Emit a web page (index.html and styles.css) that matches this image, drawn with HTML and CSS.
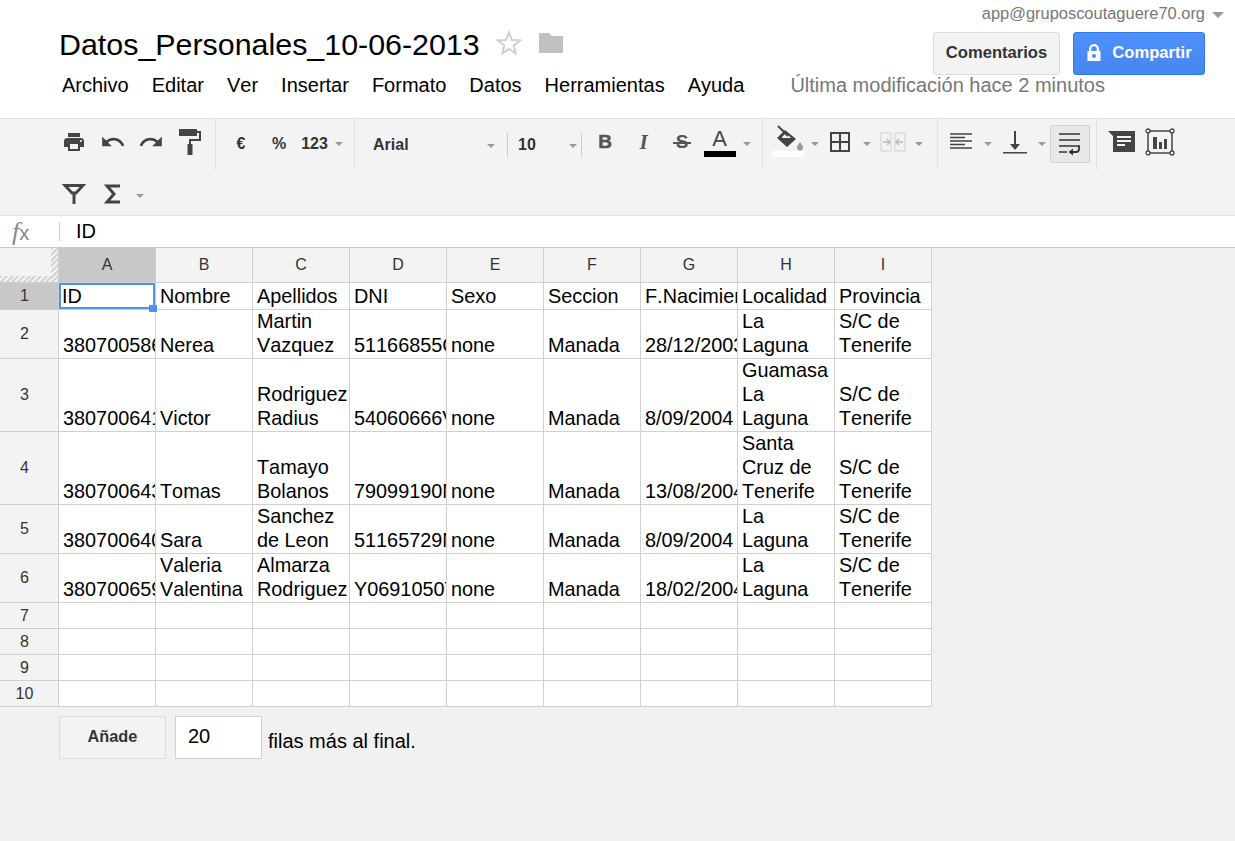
FILE: index.html
```html
<!DOCTYPE html>
<html lang="es">
<head>
<meta charset="utf-8">
<title>Datos_Personales_10-06-2013</title>
<link rel="stylesheet" href="styles.css">
</head>
<body>
<header class="head">
  <div class="head-top">
    <div class="title-wrap">
      <h1 class="title">Datos_Personales_10-06-2013</h1>
      <svg class="star" width="26" height="26" viewBox="0 0 26 26"><path d="M13 2.500l2.900 7.600 8.100.4-6.300 5.100 2.100 7.800-6.800-4.400-6.800 4.400 2.100-7.800L2 10.500l8.100-.4z" fill="none" stroke="#d0d0d0" stroke-width="2"/></svg>
      <svg class="folder" width="26" height="22" viewBox="0 0 26 22"><path d="M1 1h10l3 3h11v17H1z" fill="#c0c0c0"/></svg>
    </div>
    <div class="head-right">
      <div class="account"><span>app@gruposcoutaguere70.org</span><i class="caret acct-caret"></i></div>
      <div class="head-btns">
        <button class="btn btn-plain">Comentarios</button>
        <button class="btn btn-blue"><svg width="16" height="18" viewBox="0 0 16 18"><path d="M3 7V5a5 5 0 0 1 10 0v2h1.500v10h-13V7zm2.300 0h5.400V5a2.700 2.700 0 0 0-5.400 0z" fill="#fff"/><circle cx="8" cy="12" r="2" fill="#4d88f0"/></svg>Compartir</button>
      </div>
    </div>
  </div>
  <nav class="menu">
    <span>Archivo</span><span>Editar</span><span>Ver</span><span>Insertar</span><span>Formato</span><span>Datos</span><span>Herramientas</span><span>Ayuda</span>
    <span class="modified">Última modificación hace 2 minutos</span>
  </nav>
</header>

<section class="toolbar">
  <div class="tb-row tb-row1">
    <div class="grp g1">
      <span class="tool w38"><svg width="24" height="24" viewBox="0 0 24 24"><path fill="#444" d="M19 8H5c-1.660 0-3 1.340-3 3v6h4v4h12v-4h4v-6c0-1.660-1.340-3-3-3zm-3 11H8v-5h8v5zm3-7c-.55 0-1-.45-1-1s.45-1 1-1 1 .45 1 1-.45 1-1 1zm-1-9H6v4h12V3z"/></svg></span>
      <span class="tool w39"><svg width="26" height="26" viewBox="0 0 24 24"><path fill="#444" d="M12.500 8c-2.650 0-5.050.99-6.900 2.600L2 7v9h9l-3.620-3.620c1.390-1.160 3.160-1.880 5.120-1.880 3.540 0 6.550 2.310 7.600 5.500l2.370-.78C21.080 11.030 17.150 8 12.500 8z"/></svg></span>
      <span class="tool w38"><svg width="26" height="26" viewBox="0 0 24 24"><path fill="#444" d="M18.400 10.600C16.550 8.990 14.150 8 11.500 8c-4.650 0-8.580 3.030-9.960 7.220l2.370.78c1.050-3.190 4.050-5.500 7.590-5.500 1.960 0 3.730.72 5.120 1.880L13 16h9V7z"/></svg></span>
      <span class="tool w39"><svg width="24" height="28" viewBox="0 0 24 28"><path fill="#444" d="M1 1h18v7H1z"/><path fill="none" stroke="#444" stroke-width="2" d="M19 4h3v8H12v5"/><path fill="#444" d="M9.500 16h5v11h-5z"/></svg></span>
    </div>
    <div class="grp g2">
      <span class="tool w38 lbl">€</span>
      <span class="tool w38 lbl">%</span>
      <span class="tool w33 lbl">123</span>
      <span class="tool w16"><i class="caret"></i></span>
    </div>
    <div class="grp g3">
      <span class="select sel-font"><b class="sel-text">Arial</b><i class="caret"></i></span>
      <span class="select sel-size"><b class="sel-text">10</b><i class="caret"></i></span>
    </div>
    <div class="grp g4">
      <span class="tool w38 glyph gb">B</span>
      <span class="tool w39 glyph gi">I</span>
      <span class="tool w38 glyph gs">S</span>
      <span class="tool w37 gcolor"><span class="ga">A</span><i class="swatch swatch-black"></i></span>
      <span class="tool w18"><i class="caret"></i></span>
    </div>
    <div class="grp g5">
      <span class="tool w40 gcolor"><svg width="32" height="26" viewBox="0 0 32 26"><path fill="#444" d="M5 13l8-8 11 9-9 8z"/><path fill="#f3f3f3" d="M10 12l4-4 5 5H10z"/><path fill="none" stroke="#444" stroke-width="2" d="M6 1l10 10"/><path fill="#999" d="M28 17c2 3 3 4 3 5.500a3 3 0 0 1-6 0c0-1.500 1-2.500 3-5.500z"/></svg><i class="swatch swatch-white"></i></span>
      <span class="tool w13"><i class="caret"></i></span>
      <span class="tool w38"><svg width="22" height="22" viewBox="0 0 22 22"><path fill="none" stroke="#444" stroke-width="2" d="M2 2h18v18H2zM11 2v18M2 11h18"/></svg></span>
      <span class="tool w16"><i class="caret"></i></span>
      <span class="tool w36"><svg width="26" height="20" viewBox="0 0 26 20"><path fill="none" stroke="#ddd" stroke-width="1.500" d="M1 1h10v18H1zM15 1h10v18H15z"/><path fill="none" stroke="#bbb" stroke-width="1.500" d="M3 10h7M7 7l3 3-3 3M23 10h-7M19 7l-3 3 3 3"/></svg></span>
      <span class="tool w16"><i class="caret"></i></span>
    </div>
    <div class="grp g6">
      <span class="tool w38"><svg width="22" height="18" viewBox="0 0 22 18"><path fill="none" stroke="#444" stroke-width="1.400" d="M0 1h22M0 4.500h15M0 8h22M0 11.500h15M0 15h22"/></svg></span>
      <span class="tool w16"><i class="caret"></i></span>
      <span class="tool w37"><svg width="26" height="24" viewBox="0 0 26 24"><path fill="#444" d="M12 1h2v13h4l-5 6-5-6h4zM1 22h24v1.500H1z"/></svg></span>
      <span class="tool w17"><i class="caret"></i></span>
      <span class="tool wrap-on"><svg width="24" height="24" viewBox="0 0 24 24"><path fill="none" stroke="#333" stroke-width="1.600" d="M1 2h21M1 8h21M1 14h21M1 20h8"/><path fill="none" stroke="#333" stroke-width="1.800" d="M21 14v3a3 3 0 0 1-3 3h-5"/><path fill="#333" d="M15 16.500v7l-4.500-3.500z"/></svg></span>
    </div>
    <div class="grp g7">
      <span class="tool w38"><svg width="28" height="24" viewBox="0 0 28 24"><path fill="#444" d="M0 1h27v21H5V6z"/><path fill="#f3f3f3" d="M9 6h14v2H9zM9 10h14v2H9zM9 14h8v2H9z"/></svg></span>
      <span class="tool w38"><svg width="30" height="28" viewBox="0 0 30 28"><path fill="none" stroke="#444" stroke-width="1.500" d="M3 3h24v22H3z"/><g fill="#f3f3f3" stroke="#444" stroke-width="1.300"><circle cx="3" cy="3" r="2"/><circle cx="27" cy="3" r="2"/><circle cx="3" cy="25" r="2"/><circle cx="27" cy="25" r="2"/></g><path fill="#444" d="M8 9h4v12H8zM14 14h3v7h-3zM19 11h3v10h-3z"/></svg></span>
    </div>
  </div>
  <div class="tb-row tb-row2">
    <span class="tool w38"><svg width="24" height="22" viewBox="0 0 24 22"><path fill="none" stroke="#444" stroke-width="2.800" d="M3 2.500h18L14 10H10z"/><path fill="#444" d="M10.500 9h3v12h-3z"/></svg></span>
    <span class="tool w39"><svg width="18" height="20" viewBox="0 0 18 20"><path fill="none" stroke="#444" stroke-width="3" d="M16 2H3l7 8-7 8h13"/></svg></span>
    <span class="tool w16"><i class="caret"></i></span>
  </div>
</section>

<div class="formula">
  <span class="fx"><span class="fx-f">f</span><span class="fx-x">x</span></span>
  <span class="fx-sep"></span>
  <span class="fx-val">ID</span>
</div>

<table class="sheet">
  <thead>
    <tr>
      <th class="corner"></th><th class="col sel">A</th><th class="col">B</th><th class="col">C</th><th class="col">D</th><th class="col">E</th><th class="col">F</th><th class="col">G</th><th class="col">H</th><th class="col">I</th>
    </tr>
  </thead>
  <tbody>
    <tr class="r1"><th class="rh sel">1</th><td class="active">ID<i class="handle"></i></td><td>Nombre</td><td>Apellidos</td><td>DNI</td><td>Sexo</td><td>Seccion</td><td>F.Nacimiento</td><td>Localidad</td><td>Provincia</td></tr>
    <tr class="r2"><th class="rh">2</th><td>380700586</td><td>Nerea</td><td>Martin Vazquez</td><td>51166855G</td><td>none</td><td>Manada</td><td>28/12/2003</td><td>La Laguna</td><td>S/C de Tenerife</td></tr>
    <tr class="r3"><th class="rh">3</th><td>380700641</td><td>Victor</td><td>Rodriguez Radius</td><td>54060666V</td><td>none</td><td>Manada</td><td>8/09/2004</td><td>Guamasa La Laguna</td><td>S/C de Tenerife</td></tr>
    <tr class="r3"><th class="rh">4</th><td>380700643</td><td>Tomas</td><td>Tamayo Bolanos</td><td>79099190M</td><td>none</td><td>Manada</td><td>13/08/2004</td><td>Santa Cruz de Tenerife</td><td>S/C de Tenerife</td></tr>
    <tr class="r2"><th class="rh">5</th><td>380700640</td><td>Sara</td><td>Sanchez de Leon</td><td>51165729N</td><td>none</td><td>Manada</td><td>8/09/2004</td><td>La Laguna</td><td>S/C de Tenerife</td></tr>
    <tr class="r2"><th class="rh">6</th><td>380700659</td><td>Valeria Valentina</td><td>Almarza Rodriguez</td><td>Y0691050T</td><td>none</td><td>Manada</td><td>18/02/2004</td><td>La Laguna</td><td>S/C de Tenerife</td></tr>
    <tr class="r0"><th class="rh">7</th><td></td><td></td><td></td><td></td><td></td><td></td><td></td><td></td><td></td></tr>
    <tr class="r0"><th class="rh">8</th><td></td><td></td><td></td><td></td><td></td><td></td><td></td><td></td><td></td></tr>
    <tr class="r0"><th class="rh">9</th><td></td><td></td><td></td><td></td><td></td><td></td><td></td><td></td><td></td></tr>
    <tr class="r0"><th class="rh">10</th><td></td><td></td><td></td><td></td><td></td><td></td><td></td><td></td><td></td></tr>
  </tbody>
</table>

<div class="add-row">
  <button class="add-btn">Añade</button>
  <span class="add-input">20</span>
  <span class="add-text">filas más al final.</span>
</div>
</body>
</html>
```

FILE: styles.css
```css
* { box-sizing: border-box; }
html, body { margin: 0; padding: 0; }
body {
  width: 1235px;
  height: 841px;
  overflow: hidden;
  background: #f1f1f1;
  font-family: "Liberation Sans", Arial, sans-serif;
  font-kerning: none;
  color: #000;
}

/* header */
.head { height: 118px; background: #fff; }
.head-top { display: flex; justify-content: space-between; height: 75px; padding: 0 30px 0 59px; }
.title-wrap { display: flex; align-items: center; padding-top: 13px; height: 75px; }
.title { margin: 0; font-size: 30.4px; font-weight: 400; line-height: 34px; color: #000; }
.star { margin-left: 16px; margin-top: -2px; }
.folder { margin-left: 16px; margin-top: -2px; }
.head-right { display: flex; flex-direction: column; align-items: flex-end; position: relative; }
.account { height: 32px; padding-top: 4px; font-size: 16.45px; line-height: 19px; color: #777; }
.caret.acct-caret { position: absolute; right: -19px; top: 12px; border-top-color: #999; border-width: 6px 6px 0; margin: 0; }
.head-btns { display: flex; gap: 13px; }
.btn {
  height: 43px;
  font: bold 16.6px "Liberation Sans", Arial, sans-serif;
  font-kerning: none;
  border-radius: 3px;
  padding: 0 0 2px;
}
.btn-plain { width: 127px; background: #f3f3f3; border: 1px solid #dcdcdc; color: #333; }
.btn-blue {
  width: 132px;
  background: linear-gradient(#4d90fe, #4787ed);
  border: 1px solid #3079ed;
  color: #fff;
  display: flex;
  align-items: center;
  justify-content: center;
  gap: 10px;
}
.menu { display: flex; gap: 23px; padding-left: 62px; height: 43px; font-size: 20px; line-height: 20px; }
.modified { margin-left: 23px; color: #777; }

/* toolbar */
.toolbar { height: 98px; background: #f3f3f3; border-top: 1px solid #e0e0e0; border-bottom: 1px solid #e2e2e2; }
.tb-row { display: flex; }
.tb-row1 { height: 51px; }
.tb-row2 { height: 45px; padding: 2px 0 0 55px; align-items: center; }
.grp { display: flex; align-items: center; height: 51px; padding-bottom: 5px; border-right: 1px solid #e2e2e2; }
.g1 { width: 216px; padding-left: 55px; }
.g2 { width: 139px; padding-left: 6px; }
.g3 { width: 227px; border-right: 0; }
.g4 { width: 181px; padding-left: 4px; }
.g5 { width: 175px; padding-left: 5px; }
.g6 { width: 159px; padding-left: 4px; }
.g7 { border-right: 0; padding-left: 6px; }
.tool { display: flex; align-items: center; justify-content: center; height: 38px; flex: none; position: relative; }
.w13 { width: 13px; }
.w16 { width: 16px; }
.w17 { width: 17px; }
.w18 { width: 18px; }
.w33 { width: 33px; }
.w36 { width: 36px; }
.w37 { width: 37px; }
.w38 { width: 38px; }
.w39 { width: 39px; }
.w40 { width: 40px; }
.lbl { font-size: 16px; font-weight: 700; color: #333; padding-top: 4px; }
.sel-text { font-size: 16px; font-weight: 700; color: #333; }
.caret {
  display: inline-block;
  width: 0;
  height: 0;
  margin-top: 4px;
  border-style: solid;
  border-width: 4px 4px 0;
  border-color: #999 transparent transparent;
}
.select { display: flex; align-items: center; justify-content: space-between; height: 24px; margin-top: 5px; border-right: 1px solid #ccc; flex: none; }
.select .caret { margin-top: 2px; }
.sel-font { width: 153px; padding: 0 12px 0 18px; }
.sel-size { width: 74px; padding: 0 4px 0 10px; }
.glyph { color: #555; }
.gb { font-weight: 700; font-size: 19px; -webkit-text-stroke: 0.5px #555; }
.gi { font: italic 700 21px "Liberation Serif", serif; }
.gs { font-weight: 700; font-size: 19px; }
.gs::after { content: ""; position: absolute; left: 10px; right: 10px; top: 19px; height: 2px; background: #555; }
.gcolor { flex-direction: column; justify-content: flex-start; padding-top: 2px; }
.ga { font-size: 22px; line-height: 22px; color: #444; height: 26px; padding-top: 3px; }
.swatch { display: block; width: 32px; height: 6px; flex: none; }
.swatch-black { background: #000; }
.swatch-white { background: #fff; }
.wrap-on { width: 40px; margin-top: 4px; background: #e8e8e8; border: 1px solid #d2d2d2; border-radius: 2px; }

/* formula bar */
.formula { display: flex; align-items: center; height: 32px; background: #fff; border-bottom: 1px solid #c9c9c9; }
.fx { width: 59px; padding-left: 12px; color: #888; line-height: 24px; }
.fx-f { font: italic 26px "Liberation Serif", serif; }
.fx-x { font-size: 20px; }
.fx-sep { width: 1px; height: 19px; background: #ccc; }
.fx-val { margin-left: 16px; font-size: 20px; }

/* sheet */
.sheet { border-collapse: separate; border-spacing: 0; table-layout: fixed; width: 932px; }
.sheet th { font-weight: 400; font-size: 16px; color: #333; background: #f3f3f3; padding: 0; }
.sheet th, .sheet td { border-right: 1px solid #d0d0d0; border-bottom: 1px solid #d0d0d0; }
.sheet .rh { padding-right: 9px; }
.corner {
  width: 59px;
  height: 35px;
  background:
    repeating-linear-gradient(135deg, #d4d4d4 0 2px, #f3f3f3 2px 4px) right top / 7px 100% no-repeat,
    repeating-linear-gradient(135deg, #d4d4d4 0 2px, #f3f3f3 2px 4px) left bottom / 100% 6px no-repeat,
    #f3f3f3 !important;
}
.col { width: 97px; height: 35px; }
.sheet th.sel { background: #c8c8c8; }
.sheet td {
  background: #fff;
  font-size: 19.85px;
  line-height: 24px;
  padding: 0 2px 1px 4px;
  vertical-align: bottom;
  overflow: hidden;
}
.sheet td::before { content: ""; display: block; margin-top: -1px; }
.r1 > * { height: 27px; }
.r0 > * { height: 26px; }
.r2 > * { height: 49px; }
.r3 > * { height: 73px; }
.sheet td.active { position: relative; overflow: visible; padding-left: 3px; box-shadow: inset 0 0 0 2px #4d90fe; }
.handle { position: absolute; right: -2px; bottom: -3px; width: 8px; height: 7px; background: #4d90fe; }

/* add rows */
.add-row { display: flex; align-items: flex-start; padding: 9px 0 0 59px; }
.add-btn {
  width: 107px;
  height: 43px;
  background: #f3f3f3;
  border: 1px solid #dcdcdc;
  border-radius: 2px;
  font: bold 16.3px "Liberation Sans", Arial, sans-serif;
  font-kerning: none;
  color: #333;
  padding: 0 0 2px;
}
.add-input {
  width: 87px;
  height: 43px;
  margin-left: 9px;
  background: #fff;
  border: 1px solid #d0d0d0;
  padding-left: 12px;
  font-size: 20px;
  line-height: 38px;
}
.add-text { margin-left: 6px; font-size: 20px; line-height: 24px; padding-top: 13px; }
```
